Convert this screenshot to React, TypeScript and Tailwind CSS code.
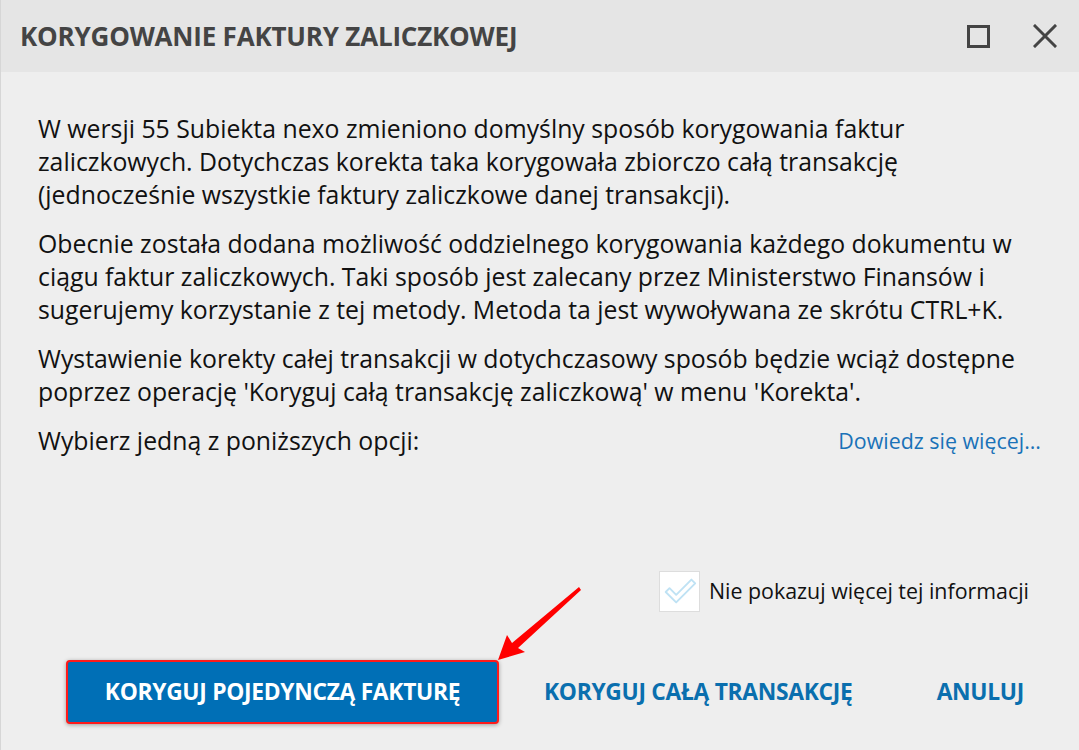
import React, { useState } from "react";

const Paragraph = ({ lines }: { lines: string[] }) => (
  <div className="flex flex-col">
    {lines.map((l) => (
      <span key={l} className="whitespace-nowrap leading-[33px]">
        {l}
      </span>
    ))}
  </div>
);

const App = () => {
  const [hide, setHide] = useState(true);

  return (
    <div
      className="relative flex h-[750px] w-[1079px] flex-col overflow-hidden border-l border-[#d6d6d6] bg-[#eeeeee] text-[#111111]"
      style={{ fontFamily: '"Open Sans", "Noto Sans", sans-serif' }}
    >
      {/* title bar */}
      <div className="flex h-[72px] shrink-0 items-center bg-[#e5e5e5] pl-[19px] pr-[22px]">
        <h1 className="flex-1 text-[26px] font-bold tracking-[-0.2px] text-[#444444]">
          KORYGOWANIE FAKTURY ZALICZKOWEJ
        </h1>
        <button className="mr-[43px] flex h-[24px] w-[24px] items-center justify-center">
          <span className="block h-[23px] w-[23px] border-[3px] border-[#444444]" />
        </button>
        <button className="flex h-[24px] w-[24px] items-center justify-center">
          <svg width="24" height="24" viewBox="0 0 24 24" stroke="#444444" strokeWidth="3" strokeLinecap="square">
            <path d="M2 2 L22 22 M22 2 L2 22" />
          </svg>
        </button>
      </div>

      {/* content */}
      <div className="flex flex-1 flex-col gap-[16px] pl-[37px] pr-[38px] pt-[40px] text-[24.8px]">
        <Paragraph
          lines={[
            "W wersji 55 Subiekta nexo zmieniono domyślny sposób korygowania faktur",
            "zaliczkowych. Dotychczas korekta taka korygowała zbiorczo całą transakcję",
            "(jednocześnie wszystkie faktury zaliczkowe danej transakcji).",
          ]}
        />
        <Paragraph
          lines={[
            "Obecnie została dodana możliwość oddzielnego korygowania każdego dokumentu w",
            "ciągu faktur zaliczkowych. Taki sposób jest zalecany przez Ministerstwo Finansów i",
            "sugerujemy korzystanie z tej metody. Metoda ta jest wywoływana ze skrótu CTRL+K.",
          ]}
        />
        <Paragraph
          lines={[
            "Wystawienie korekty całej transakcji w dotychczasowy sposób będzie wciąż dostępne",
            "poprzez operację 'Koryguj całą transakcję zaliczkową' w menu 'Korekta'.",
          ]}
        />
        <div className="flex items-center justify-between leading-[33px]">
          <span>Wybierz jedną z poniższych opcji:</span>
          <a className="cursor-pointer text-[21.4px] text-[#1a72b8]">Dowiedz się więcej...</a>
        </div>
      </div>

      {/* checkbox */}
      <div className="flex justify-end pr-[50px]">
        <label className="flex cursor-pointer items-center gap-[9px] text-[21.4px]">
          <span
            className="flex h-[41px] w-[41px] items-center justify-center border border-[#dddddd] bg-white"
            onClick={() => setHide(!hide)}
          >
            {hide && (
              <svg width="41" height="41" viewBox="0 0 41 41" fill="none" stroke="#bfe2f4" strokeWidth="2" strokeLinejoin="round">
                <path d="M6 21 L10 17 L17 24 L33 8 L37 12 L17 32 Z" />
              </svg>
            )}
          </span>
          <span>Nie pokazuj więcej tej informacji</span>
        </label>
      </div>

      {/* buttons */}
      <div className="mb-[26px] mt-[48px] flex items-center pl-[65px] pr-[55px]">
        <button className="h-[64px] w-[433px] rounded-[4px] border-2 border-[#ff1a1a] bg-[#006fb6] text-[22.8px] font-bold tracking-[-0.3px] text-white shadow-[0_1px_4px_rgba(0,0,0,0.35)]">
          KORYGUJ POJEDYNCZĄ FAKTURĘ
        </button>
        <button className="ml-[45px] text-[22.8px] font-bold tracking-[-0.3px] text-[#0a6fae]">
          KORYGUJ CAŁĄ TRANSAKCJĘ
        </button>
        <div className="flex-1" />
        <button className="text-[22.8px] font-bold tracking-[-0.3px] text-[#0a6fae]">ANULUJ</button>
      </div>

      {/* annotation arrow */}
      <svg
        className="pointer-events-none absolute left-[490px] top-[580px]"
        width="100"
        height="90"
        viewBox="0 0 100 90"
      >
        <path d="M7 80 L16 55 L21 63 L88 7 L90 10 L27 68 L34 72 Z" fill="#ff0000" />
      </svg>
    </div>
  );
};

export default App;
